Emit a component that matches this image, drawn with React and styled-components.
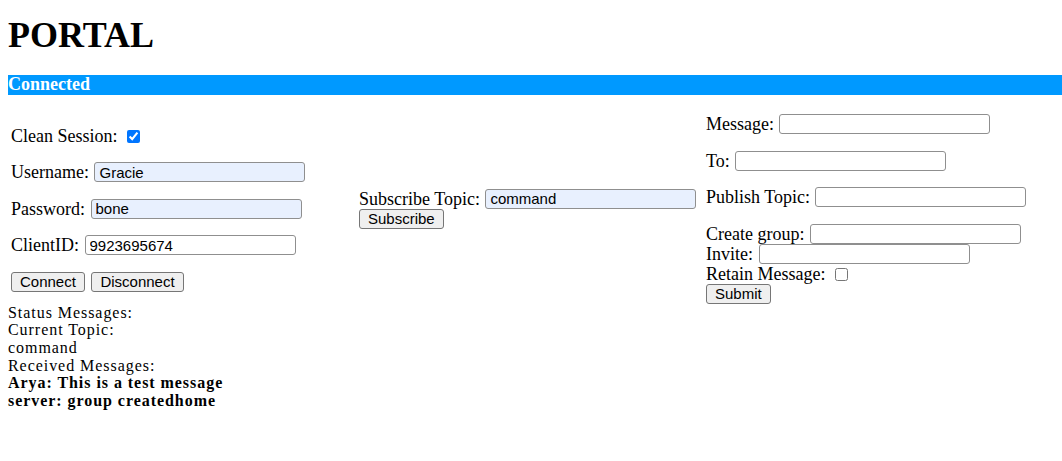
import React from 'react'
import styled, { createGlobalStyle } from 'styled-components'

const Global = createGlobalStyle`
  body {
    margin: 0;
    padding: 0 8px;
    font-family: "Liberation Serif", "Times New Roman", serif;
    font-size: 18px;
    color: #000;
    background: #fff;
  }
`

const Title = styled.h1`
  font-size: 36px;
  line-height: 37px;
  font-weight: bold;
  margin: 0;
  padding: 17px 0 21px;
`

const StatusBar = styled.div`
  background: #0099ff;
  color: #fff;
  font-weight: bold;
  height: 20px;
  line-height: 18px;
  margin-right: -8px;
`

const Panels = styled.div`
  display: grid;
  grid-template-columns: 348px 347px 1fr;
  align-items: center;
`

const Column = styled.div`
  display: flex;
  flex-direction: column;
  gap: 16.5px;
  padding: 19px 3px 0;
`

const Row = styled.div`
  white-space: nowrap;
  line-height: 20px;
  height: 20px;
`

const Stack = styled.div`
  white-space: nowrap;
  line-height: 20px;
`

const Field = styled.input`
  box-sizing: border-box;
  width: 211px;
  height: 20px;
  padding: 0 4px;
  margin: 0 0 0 1px;
  border: 1px solid #8f8f8f;
  border-radius: 3px;
  font: 15px "Liberation Sans", Arial, sans-serif;
  color: #000;
  background: ${(p) => (p.$filled ? '#e8f0fe' : '#fff')};
  vertical-align: top;
`

const Check = styled.input`
  margin: 0 3px 0 5px;
  width: 13px;
  height: 13px;
  vertical-align: -1px;
`

const Button = styled.button`
  box-sizing: border-box;
  height: 20px;
  font: 15px "Liberation Sans", Arial, sans-serif;
  line-height: 16px;
  padding: 0 8px;
  margin: 0 2px 0 0;
  border: 1px solid #767676;
  border-radius: 3px;
  background: #efefef;
  color: #000;
  vertical-align: top;
`

const Log = styled.div`
  font-size: 16px;
  line-height: 17.7px;
  letter-spacing: 0.95px;
`

const Strong = styled.div`
  font-weight: bold;
`

export default function App() {
  return (
    <>
      <Global />
      <Title>PORTAL</Title>
      <StatusBar>Connected</StatusBar>
      <Panels>
        <Column>
          <Row>
            Clean Session: <Check type="checkbox" defaultChecked />
          </Row>
          <Row>
            Username: <Field $filled defaultValue="Gracie" />
          </Row>
          <Row>
            Password: <Field $filled defaultValue="bone" />
          </Row>
          <Row>
            ClientID: <Field defaultValue="9923695674" />
          </Row>
          <Row>
            <Button>Connect</Button> <Button>Disconnect</Button>
          </Row>
        </Column>
        <Column>
          <Stack>
            Subscribe Topic: <Field $filled defaultValue="command" />
            <br />
            <Button>Subscribe</Button>
          </Stack>
        </Column>
        <Column>
          <Row>
            Message: <Field />
          </Row>
          <Row>
            To: <Field />
          </Row>
          <Row>
            Publish Topic: <Field />
          </Row>
          <Stack>
            Create group: <Field />
            <br />
            Invite: <Field />
            <br />
            Retain Message: <Check type="checkbox" />
            <br />
            <Button>Submit</Button>
          </Stack>
        </Column>
      </Panels>
      <Log>
        <div>Status Messages:</div>
        <div>Current Topic:</div>
        <div>command</div>
        <div>Received Messages:</div>
        <Strong>Arya: This is a test message</Strong>
        <Strong>server: group createdhome</Strong>
      </Log>
    </>
  )
}
